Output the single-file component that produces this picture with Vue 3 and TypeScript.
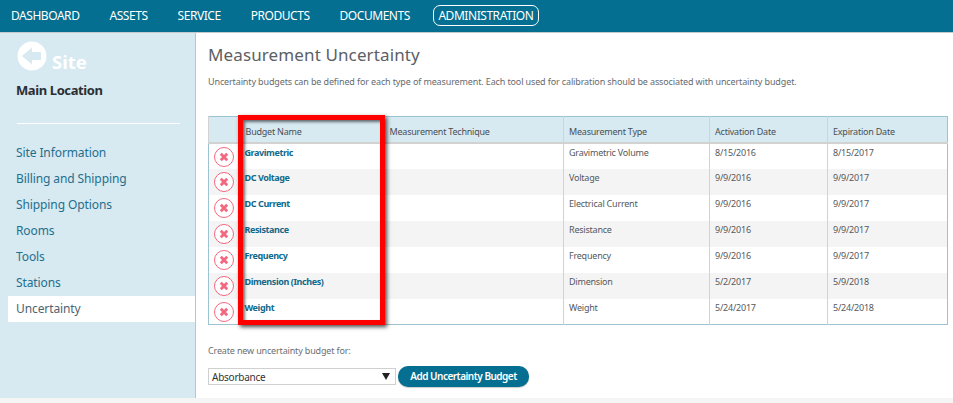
<script setup lang="ts">
const nav: string[] = ['DASHBOARD', 'ASSETS', 'SERVICE', 'PRODUCTS', 'DOCUMENTS']
const side: string[] = ['Site Information', 'Billing and Shipping', 'Shipping Options', 'Rooms', 'Tools', 'Stations']
const rows: string[][] = [
  ['Gravimetric', 'Gravimetric Volume', '8/15/2016', '8/15/2017'],
  ['DC Voltage', 'Voltage', '9/9/2016', '9/9/2017'],
  ['DC Current', 'Electrical Current', '9/9/2016', '9/9/2017'],
  ['Resistance', 'Resistance', '9/9/2016', '9/9/2017'],
  ['Frequency', 'Frequency', '9/9/2016', '9/9/2017'],
  ['Dimension (Inches)', 'Dimension', '5/2/2017', '5/9/2018'],
  ['Weight', 'Weight', '5/24/2017', '5/24/2018']
]
</script>

<template>
  <div class="page">
    <header class="top">
      <a v-for="n in nav" :key="n" class="nav-item">{{ n }}</a>
      <a class="nav-item active">ADMINISTRATION</a>
    </header>
    <div class="body">
      <aside class="side">
        <div class="back">
          <svg width="30" height="30" viewBox="0 0 30 30">
            <circle cx="15" cy="15" r="14.5" fill="#fff" />
            <path d="M5 15 L15 6.5 V11 H24 V19 H15 V23.5 Z" fill="#d7e9f1" />
          </svg>
          <span>Site</span>
        </div>
        <div class="loc">Main Location</div>
        <div class="rule"></div>
        <ul class="menu">
          <li v-for="s in side" :key="s">{{ s }}</li>
          <li class="current">Uncertainty</li>
        </ul>
      </aside>
      <main class="main">
        <h1>Measurement Uncertainty</h1>
        <p class="intro">Uncertainty budgets can be defined for each type of measurement. Each tool used for calibration should be associated with uncertainty budget.</p>
        <div class="table-wrap">
          <table>
            <colgroup>
              <col class="c0" /><col class="c1" /><col class="c2" /><col class="c3" /><col class="c4" /><col />
            </colgroup>
            <thead>
              <tr>
                <th></th>
                <th>Budget Name</th>
                <th>Measurement Technique</th>
                <th>Measurement Type</th>
                <th>Activation Date</th>
                <th>Expiration Date</th>
              </tr>
            </thead>
            <tbody>
              <tr v-for="r in rows" :key="r[0]">
                <td class="x-cell">
                  <span class="x">
                    <svg width="10" height="10" viewBox="0 0 10 10">
                      <path d="M1.8 1.8 L8.2 8.2 M8.2 1.8 L1.8 8.2" stroke="#f2687f" stroke-width="2.8" />
                    </svg>
                  </span>
                </td>
                <td class="name">{{ r[0] }}</td>
                <td></td>
                <td>{{ r[1] }}</td>
                <td>{{ r[2] }}</td>
                <td>{{ r[3] }}</td>
              </tr>
            </tbody>
          </table>
          <div class="highlight"></div>
        </div>
        <div class="create">Create new uncertainty budget for:</div>
        <div class="form">
          <div class="select">
            <span>Absorbance</span>
            <svg width="8" height="7" viewBox="0 0 8 7"><path d="M0 0 H8 L4 7 Z" fill="#222" /></svg>
          </div>
          <button class="add" type="button">Add Uncertainty Budget</button>
        </div>
      </main>
    </div>
    <div class="foot"></div>
  </div>
</template>

<style scoped>
.page {
  width: 953px;
  height: 403px;
  overflow: hidden;
  display: flex;
  flex-direction: column;
  font-family: "Noto Sans", "Open Sans", sans-serif;
  background: #fff;
}
.top {
  height: 30px;
  flex: none;
  background: #046f90;
  border-bottom: 1px solid #c4c9cb;
  display: flex;
  align-items: center;
  padding: 0 0 2px 4px;
  gap: 16px;
}
.nav-item {
  color: #fff;
  font-size: 12px;
  line-height: 19px;
  padding: 0 6px;
  border: 1px solid transparent;
  border-radius: 7px;
  letter-spacing: -0.45px;
}
.active {
  border-color: #fff;
  padding: 0 4.5px;
}
.body {
  flex: 1;
  display: flex;
  min-height: 0;
}
.side {
  width: 195px;
  flex: none;
  background: #d7e9f1;
  border-right: 1px solid #b9c5ca;
}
.back {
  display: flex;
  align-items: flex-end;
  padding: 8px 0 0 17px;
  height: 30px;
  gap: 5px;
}
.back span {
  color: #fff;
  font-size: 18.5px;
  font-weight: 700;
  line-height: 24px;
  position: relative;
  top: 3px;
}
.loc {
  margin: 9px 0 0 16px;
  font-size: 13px;
  font-weight: 700;
  line-height: 20px;
  color: #2b2f33;
  letter-spacing: -0.4px;
}
.rule {
  margin: 23px 15px 0 17px;
  height: 1px;
  background: #fff;
}
.menu {
  list-style: none;
  margin: 16px 0 0 8px;
  padding: 0;
}
.menu li {
  height: 26px;
  line-height: 25px;
  padding-left: 8px;
  font-size: 12px;
  color: #1f6f8e;
  letter-spacing: -0.1px;
}
.menu li.current {
  background: #fff;
  color: #4e6470;
}
.main {
  flex: 1;
  padding: 0 5px 0 12px;
  min-width: 0;
}
h1 {
  margin: 10px 0 0;
  font-size: 17px;
  font-weight: 400;
  line-height: 24px;
  color: #5c6064;
  letter-spacing: 0.12px;
}
.intro {
  margin: 8px 0 0;
  font-size: 9px;
  line-height: 14px;
  color: #666b70;
  letter-spacing: -0.13px;
}
.table-wrap {
  position: relative;
  margin-top: 27px;
}
table {
  width: 740px;
  table-layout: fixed;
  border-collapse: collapse;
  border: 1px solid #9cc3d2;
  font-size: 9px;
  letter-spacing: -0.22px;
}
.c0 { width: 30px; }
.c1 { width: 148px; }
.c2 { width: 177px; }
.c3 { width: 146px; }
.c4 { width: 118px; }
th {
  height: 26px;
  box-sizing: border-box;
  padding: 5px 0 0 5px;
  background: #d7e9f1;
  font-weight: 400;
  text-align: left;
  color: #4a4f54;
  border-bottom: 2px solid #d2d2d2;
  border-left: 1px solid #d2d2d2;
}
th:nth-child(2), th:nth-child(3) { border-left: 0; }
th:nth-child(2), td:nth-child(2) { padding-left: 7px; }
th:nth-child(3) { padding-left: 3px; }
td {
  height: 26px;
  padding: 3px 0 0 5px;
  vertical-align: top;
  color: #55595d;
  line-height: 12px;
  box-sizing: border-box;
  border-left: 1px solid #d2d2d2;
}
td:nth-child(2), td:nth-child(3) { border-left: 0; }
tbody tr:nth-child(even) td { background: #f4f4f4; }
td.x-cell {
  padding: 3px 0 0 5px;
  border-left: 0;
}
td.name {
  color: #11698a;
  font-weight: 700;
  padding-left: 6px;
  letter-spacing: -0.4px;
}
.x {
  display: flex;
  width: 20px;
  height: 20px;
  box-sizing: border-box;
  border: 1px solid #f2687f;
  border-radius: 50%;
  align-items: center;
  justify-content: center;
  background: #fff;
}
.highlight {
  position: absolute;
  left: 30px;
  top: -1px;
  width: 147px;
  height: 210px;
  box-sizing: border-box;
  border: 5px solid #f00;
  box-shadow: 2px 2px 4px rgba(0, 0, 0, 0.7), inset 2px 2px 3px rgba(0, 0, 0, 0.55);
  pointer-events: none;
}
.create {
  margin-top: 19px;
  font-size: 9px;
  line-height: 14px;
  color: #6b6f73;
  letter-spacing: -0.16px;
}
.form {
  display: flex;
  align-items: flex-start;
  margin-top: 8px;
}
.select {
  width: 188px;
  height: 17px;
  margin-top: 2px;
  box-sizing: border-box;
  background: #fff;
  border: 1px solid #d0d0d0;
  display: flex;
  align-items: center;
  justify-content: space-between;
  padding: 0 5px 0 3px;
  font-size: 10px;
  color: #333;
  letter-spacing: -0.25px;
}
.add {
  margin-left: 2px;
  width: 131px;
  height: 21px;
  padding: 0 0 1px;
  border: 0;
  border-radius: 10px;
  background: #046f90;
  color: #fff;
  font-family: inherit;
  font-size: 10px;
  font-weight: 600;
  letter-spacing: -0.5px;
  box-shadow: 0 1px 1px rgba(0, 0, 0, 0.2);
}
.foot {
  height: 5px;
  flex: none;
  background: #f5f5f5;
}
</style>
